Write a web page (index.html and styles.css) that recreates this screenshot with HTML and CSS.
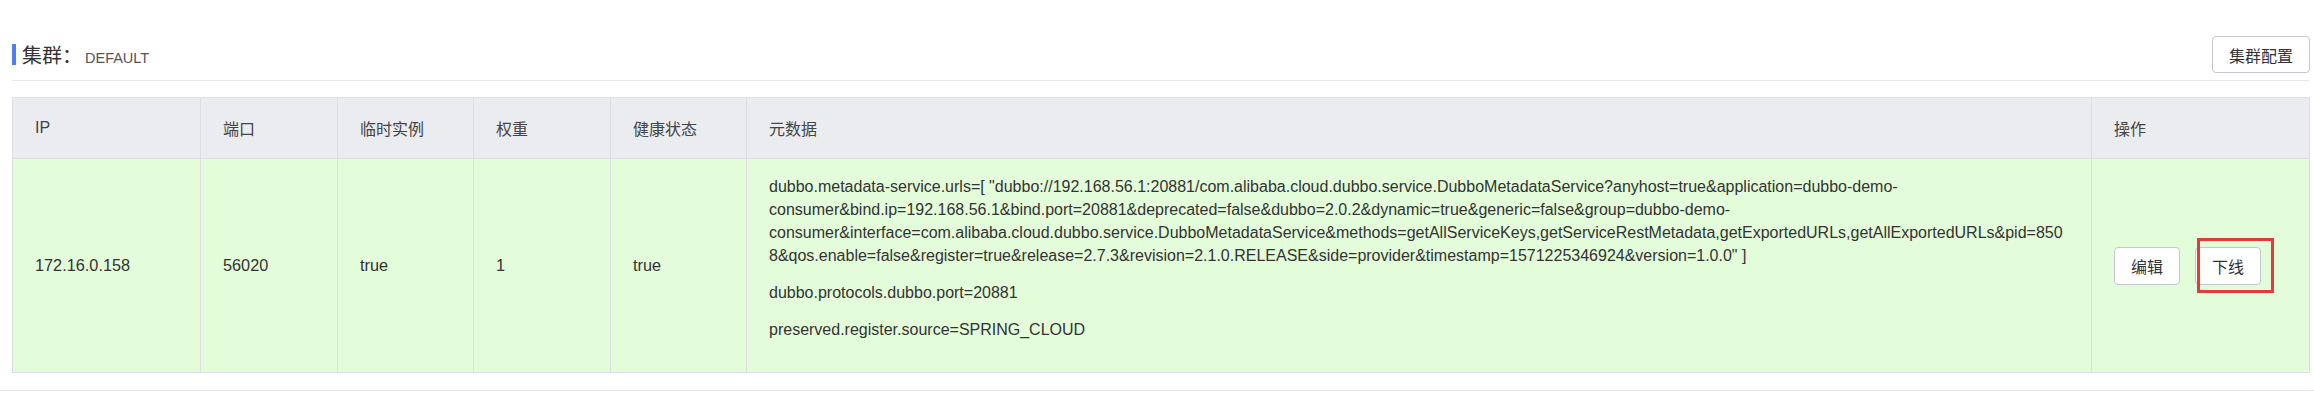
FILE: index.html
```html
<!DOCTYPE html>
<html lang="zh-CN">
<head>
<meta charset="utf-8">
<title>集群 DEFAULT</title>
<link rel="stylesheet" href="styles.css">
</head>
<body>
<section class="cluster">
  <div class="cluster-head">
    <h3 class="cluster-title"><span class="label">集群：</span><span class="name">DEFAULT</span></h3>
    <button class="btn">集群配置</button>
  </div>
  <table class="instances">
    <colgroup>
      <col class="c-ip">
      <col class="c-port">
      <col class="c-eph">
      <col class="c-weight">
      <col class="c-health">
      <col class="c-meta">
      <col class="c-ops">
    </colgroup>
    <thead>
      <tr>
        <th>IP</th>
        <th>端口</th>
        <th>临时实例</th>
        <th>权重</th>
        <th>健康状态</th>
        <th>元数据</th>
        <th>操作</th>
      </tr>
    </thead>
    <tbody>
      <tr class="online">
        <td>172.16.0.158</td>
        <td>56020</td>
        <td>true</td>
        <td>1</td>
        <td>true</td>
        <td class="meta">
          <p>dubbo.metadata-service.urls=[ &quot;dubbo://192.168.56.1:20881/com.alibaba.cloud.dubbo.service.DubboMetadataService?anyhost=true&amp;application=dubbo-demo-consumer&amp;bind.ip=192.168.56.1&amp;bind.port=20881&amp;deprecated=false&amp;dubbo=2.0.2&amp;dynamic=true&amp;generic=false&amp;group=dubbo-demo-consumer&amp;interface=com.alibaba.cloud.dubbo.service.DubboMetadataService&amp;methods=getAllServiceKeys,getServiceRestMetadata,getExportedURLs,getAllExportedURLs&amp;pid=8508&amp;qos.enable=false&amp;register=true&amp;release=2.7.3&amp;revision=2.1.0.RELEASE&amp;side=provider&amp;timestamp=1571225346924&amp;version=1.0.0&quot; ]</p>
          <p>dubbo.protocols.dubbo.port=20881</p>
          <p>preserved.register.source=SPRING_CLOUD</p>
        </td>
        <td class="ops">
          <button class="btn btn-sm">编辑</button><span class="marked"><button class="btn btn-sm">下线</button><span class="mark"></span></span>
        </td>
      </tr>
    </tbody>
  </table>
</section>
</body>
</html>
```

FILE: styles.css
```css
* { box-sizing: border-box; }

body {
  margin: 0;
  background: #fff;
  font-family: "Liberation Sans", "Noto Sans CJK SC", sans-serif;
  color: #333;
}

.cluster {
  padding: 36px 4px 17px 12px;
  border-bottom: 1px solid #e4e5e9;
}

.cluster-head {
  display: flex;
  align-items: center;
  justify-content: space-between;
  padding-bottom: 7px;
  border-bottom: 1px solid #e6e7eb;
}

.cluster-title {
  margin: 0;
  display: flex;
  align-items: baseline;
  border-left: 4px solid #4d80f5;
  padding-left: 6px;
  height: 21px;
  line-height: 21px;
  font-weight: normal;
}

.cluster-title .label {
  font-family: "Noto Sans CJK SC", sans-serif;
  font-size: 20px;
  color: #333;
}

.cluster-title .name {
  font-size: 14.5px;
  color: #555;
  margin-left: 3px;
}

.btn {
  height: 37px;
  padding: 0 16px;
  border: 1px solid #c4c6cf;
  border-radius: 4px;
  background: #fff;
  color: #333;
  font-family: "Noto Sans CJK SC", sans-serif;
  font-size: 16px;
  line-height: 1;
  cursor: pointer;
}

.btn-sm {
  height: 38px;
}

.instances {
  margin-top: 16px;
  width: 100%;
  border-collapse: collapse;
  table-layout: fixed;
  border: 1px solid #dcdee3;
  font-size: 16px;
}

.c-ip { width: 188px; }
.c-port { width: 137px; }
.c-eph { width: 136px; }
.c-weight { width: 137px; }
.c-health { width: 136px; }
.c-ops { width: 218px; }

.instances th,
.instances td {
  border: 1px solid #dcdee3;
  padding: 0 22px;
  text-align: left;
  font-weight: normal;
}

.instances th {
  height: 61px;
  background: #ebecf0;
  color: #444;
}

.instances td {
  color: #333;
  font-size: 16.3px;
  vertical-align: middle;
}

.online td {
  background: #e3fcda;
}

.instances td.meta {
  padding: 16px 24px 31px 22px;
  font-size: 16px;
  line-height: 23px;
  overflow-wrap: anywhere;
}

.meta p {
  margin: 0 0 14px;
}

.meta p:last-child {
  margin-bottom: 0;
}

.ops {
  white-space: nowrap;
}

.ops > .btn {
  margin-right: 15px;
}

.marked {
  position: relative;
  display: inline-block;
}

.mark {
  position: absolute;
  left: 2px;
  top: -9px;
  width: 77px;
  height: 55px;
  border: 3px solid #e53a3a;
  pointer-events: none;
}
```
